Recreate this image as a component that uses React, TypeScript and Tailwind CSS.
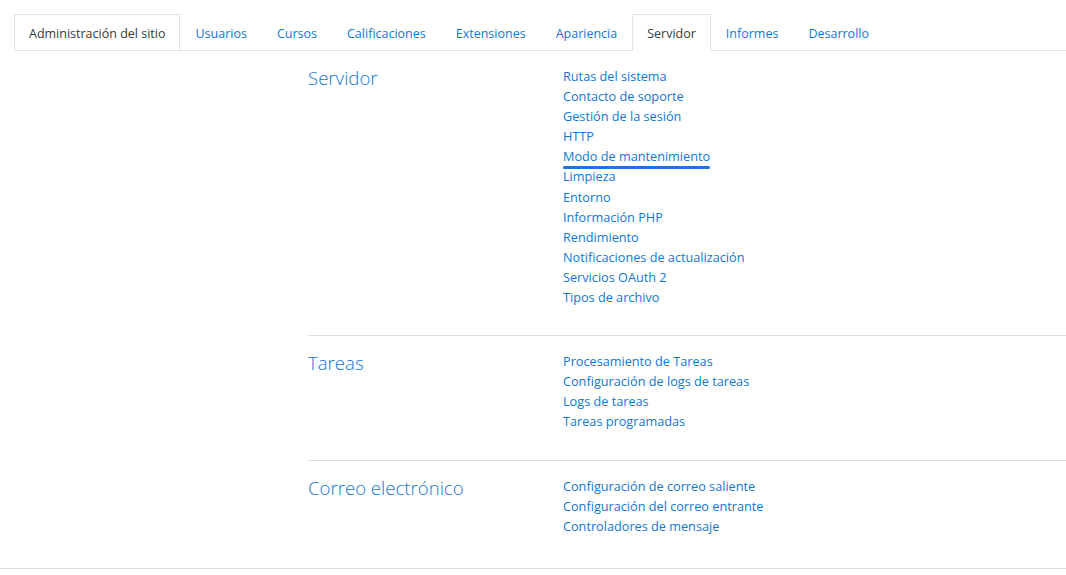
const tabs = [
  "Administración del sitio",
  "Usuarios",
  "Cursos",
  "Calificaciones",
  "Extensiones",
  "Apariencia",
  "Servidor",
  "Informes",
  "Desarrollo",
];

const sections = [
  {
    title: "Servidor",
    links: [
      "Rutas del sistema",
      "Contacto de soporte",
      "Gestión de la sesión",
      "HTTP",
      "Modo de mantenimiento",
      "Limpieza",
      "Entorno",
      "Información PHP",
      "Rendimiento",
      "Notificaciones de actualización",
      "Servicios OAuth 2",
      "Tipos de archivo",
    ],
  },
  {
    title: "Tareas",
    links: [
      "Procesamiento de Tareas",
      "Configuración de logs de tareas",
      "Logs de tareas",
      "Tareas programadas",
    ],
  },
  {
    title: "Correo electrónico",
    links: [
      "Configuración de correo saliente",
      "Configuración del correo entrante",
      "Controladores de mensaje",
    ],
  },
];

function Tabs() {
  return (
    <ul className="flex border-b border-[#dee2e6] ml-[14px] mt-[14px]">
      {tabs.map((t, i) => {
        const first = i === 0;
        const active = t === "Servidor";
        return (
          <li key={t} className={active ? "-mb-px" : ""}>
            <a
              className={`block h-9 pt-[2px] px-[14px] leading-[33px] text-[12.5px] ${
                first
                  ? "border border-[#dee2e6] border-b-0 text-[#343a40]"
                  : active
                    ? "border border-[#dee2e6] border-b-white bg-white h-[37px] text-[#343a40]"
                    : "border border-transparent text-[#1177d1]"
              }`}
            >
              {t}
            </a>
          </li>
        );
      })}
    </ul>
  );
}

export default function App() {
  return (
    <div className="min-h-[575px] bg-white font-['Open_Sans',sans-serif]">
      <Tabs />
      <div className="ml-[308px]">
        {sections.map((s, i) => (
          <section
            key={s.title}
            className={`flex pt-[15px] ${i < sections.length - 1 ? "pb-[28px] border-b border-[#dedede]" : "pb-[32px]"}`}
          >
            <h3 className="w-[255px] shrink-0 text-[18.6px] leading-6 font-light text-[#1177d1]">{s.title}</h3>
            <ul className="text-[12.7px] leading-[20.1px] text-[#1177d1]">
              {s.links.map((l) => (
                <li key={l}>
                  {l === "Modo de mantenimiento" ? (
                    <span className="relative inline-block">
                      {l}
                      <span className="absolute left-0 right-0 -bottom-[3px] h-[3px] rounded-full bg-[#1a73e8]" />
                    </span>
                  ) : (
                    l
                  )}
                </li>
              ))}
            </ul>
          </section>
        ))}
      </div>
      <div className="border-b border-[#dedede]" />
    </div>
  );
}
